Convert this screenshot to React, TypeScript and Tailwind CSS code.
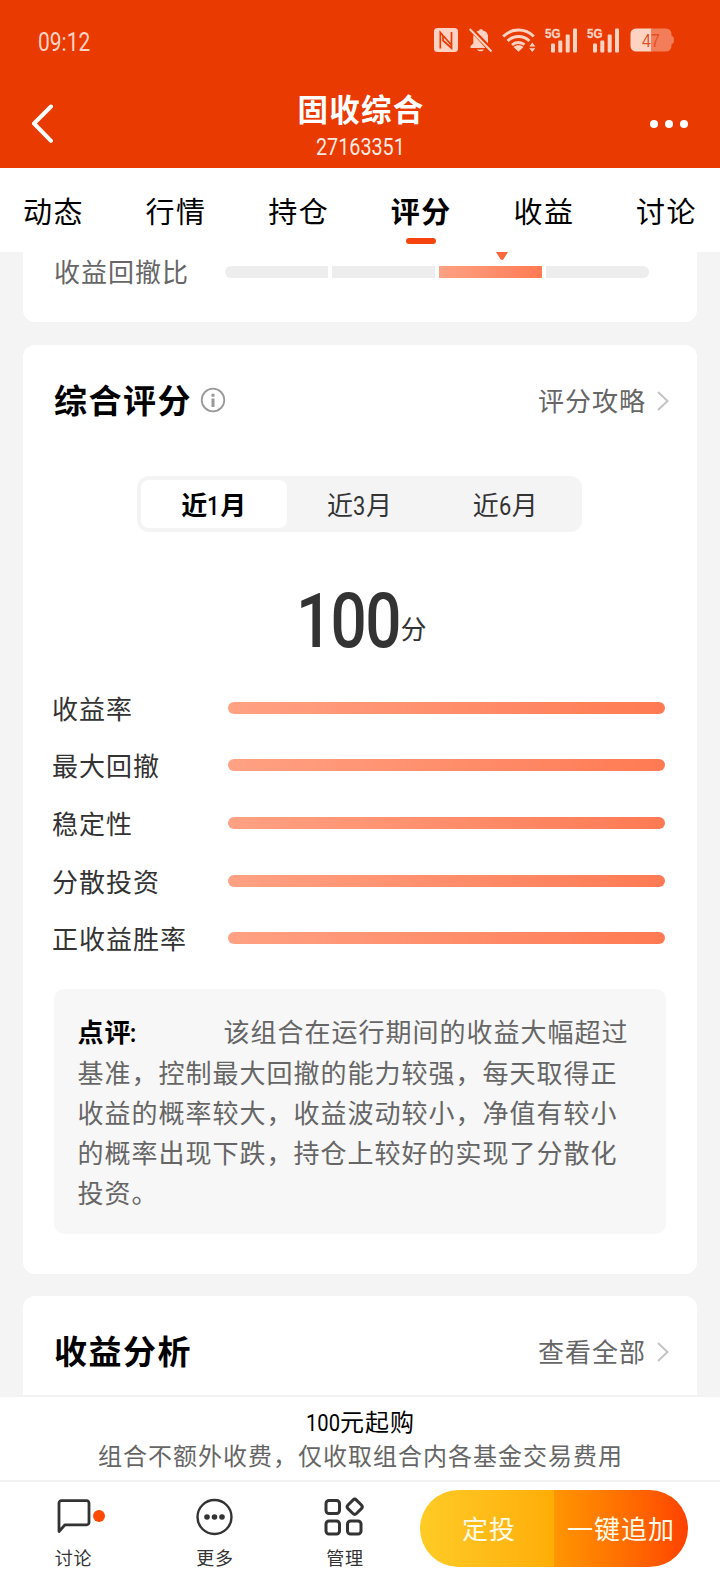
import clsx from 'clsx'
import type { ReactNode } from 'react'

const tabs = ['动态', '行情', '持仓', '评分', '收益', '讨论']
const periods = ['1', '3', '6']

const scores = [
  { label: '收益率', value: 100 },
  { label: '最大回撤', value: 100 },
  { label: '稳定性', value: 100 },
  { label: '分散投资', value: 100 },
  { label: '正收益胜率', value: 100 },
]

// condensed digits, each caller sets the width the squeezed text takes up
function Num({ className, children }: { className?: string; children: ReactNode }) {
  return (
    <span className={clsx("inline-block whitespace-nowrap text-left font-['Roboto',sans-serif] tracking-normal", className)}>
      <span className="inline-block origin-left scale-x-[0.84]">{children}</span>
    </span>
  )
}

function Signal() {
  return (
    <svg width="33" height="26" viewBox="0 0 33 26" fill="currentColor" stroke="none">
      <text x="0" y="10.500" fontSize="13.500" fontWeight="700" stroke="currentColor" strokeWidth="0.300" textLength="15.500" lengthAdjust="spacingAndGlyphs">
        5G
      </text>
      <rect x="6" y="16.500" width="4" height="9" rx="1" />
      <rect x="13.300" y="13.500" width="4" height="12" rx="1" />
      <rect x="20.700" y="7.500" width="4" height="18" rx="1" />
      <rect x="28" y="1.500" width="4" height="24" rx="1" />
    </svg>
  )
}

function StatusBar() {
  return (
    <div className="flex h-[80px] items-center justify-between pl-[38px] pr-[45px] text-[#ffd3c4]">
      <span className="pt-[4px] text-[25px] leading-none">
        <Num className="w-[53px] font-normal">09:12</Num>
      </span>
      <div className="flex items-center">
        <svg width="24" height="24" viewBox="0 0 24 24" className="mr-[11px]">
          <rect width="24" height="24" rx="3.500" fill="currentColor" />
          <path d="M6.300 20.500V4.500L17 16.500M17.500 4v16L9 12.500V8" fill="none" stroke="#e93a02" strokeWidth="1.700" />
        </svg>
        <svg width="24" height="24" viewBox="0 0 24 24" fill="currentColor" className="mr-[9px]">
          <path d="M7.500 3.500C9 2.700 10 2.300 10.600 2.200V1.300h2.800v.9c3.900.8 5.600 3.300 5.600 6.500v6.500zM4.600 7 16.500 20H1.500v-2l2.800-2.500V9.500c0-.7.100-1.600.3-2.500z" />
          <path d="M8 21.500h7c-.8 2.400-6.200 2.400-7 0z" />
          <path d="M.7 1 22.500 23.500" stroke="currentColor" strokeWidth="2" />
        </svg>
        <svg width="34" height="24" viewBox="0 0 34 24" fill="none" stroke="currentColor" className="mr-[9px]">
          <path d="M1.200 8.500a21.500 21.500 0 0 1 30.600 0" strokeWidth="3" />
          <path d="M5.600 13a15.500 15.500 0 0 1 21.800 0" strokeWidth="3" />
          <path d="M10 17a9.500 9.500 0 0 1 12.500-.3" strokeWidth="2.800" />
          <path d="M11.500 19c2.500-2.400 7.500-2.400 10 0l-5 4.700z" fill="currentColor" stroke="none" />
          <path d="M27.200 18.500h6.200L30.300 14.500zM27.200 20.300h6.200L30.300 24z" fill="currentColor" stroke="none" />
        </svg>
        <div className="mr-[9px]">
          <Signal />
        </div>
        <div className="mr-[10px]">
          <Signal />
        </div>
        <svg width="45" height="24" viewBox="0 0 45 24">
          <path d="M6 .5h15.500v23H6a5.500 5.500 0 0 1-5.500-5.500V6A5.500 5.500 0 0 1 6 .5z" fill="#ffd3c4" />
          <path d="M21.500.5H36A5.500 5.500 0 0 1 41.500 6v2q2.500 0 2.500 4t-2.500 4v2a5.500 5.500 0 0 1-5.500 5.500H21.500z" fill="#f27d58" />
          <text x="12" y="18.500" fontSize="18" textLength="18" lengthAdjust="spacingAndGlyphs" fill="#e4501f">
            47
          </text>
        </svg>
      </div>
    </div>
  )
}

function Header() {
  return (
    <header className="flex h-[88px] items-start justify-between px-[30px]">
      <svg width="60" height="40" viewBox="0 0 60 40" className="mt-[24px]" fill="none" stroke="#fff" strokeWidth="4" strokeLinecap="round" strokeLinejoin="round">
        <path d="M21 2.500 4 19.500 21 36.800" />
      </svg>
      <div className="flex flex-col items-center text-white">
        <h1 className="mt-[13px] h-[34px] pl-[2px] text-[30.500px] font-bold leading-[34px] tracking-[1.300px]">固收综合</h1>
        <span className="mt-[8px] text-[23.500px] leading-[24px] text-[#ffe9e1]">
          <Num className="w-[88px] font-normal">27163351</Num>
        </span>
      </div>
      <div className="mt-[40px] flex h-2 w-[60px] justify-end gap-[7px] pr-[1.500px]">
        <i className="size-2 rounded-full bg-white" />
        <i className="size-2 rounded-full bg-white" />
        <i className="size-2 rounded-full bg-white" />
      </div>
    </header>
  )
}

function Tabs() {
  return (
    <nav className="flex h-[84px] justify-between bg-white px-[23px] text-[29px] tracking-[1.500px] text-black">
      {tabs.map((tab) => (
        <div key={tab} className="flex flex-col items-center">
          <span className={clsx('mt-[24px] leading-[42px]', tab === '评分' && 'font-bold')}>{tab}</span>
          {tab === '评分' && <i className="mr-px mt-[4px] h-[6px] w-[30px] rounded-full bg-[#f5440f]" />}
        </div>
      ))}
    </nav>
  )
}

function CardHead({ title, link, info }: { title: string; link: string; info?: boolean }) {
  return (
    <div className="flex h-[50px] items-center pl-[31px] pr-[28px]">
      <h2 className="text-[33px] font-bold leading-[50px] tracking-[1.500px] text-black">{title}</h2>
      {info && (
        <svg width="26" height="26" viewBox="0 0 26 26" className="mb-[4px] ml-[8px]" fill="none" stroke="#999">
          <circle cx="13" cy="13" r="11.300" strokeWidth="1.800" />
          <path d="M13 11.500v8.500M13 6.700v3" strokeWidth="3" />
        </svg>
      )}
      <span className="ml-auto pt-px text-[26px] tracking-[1px] text-[#666]">{link}</span>
      <svg width="12" height="20" viewBox="0 0 12 20" className="mb-[3px] ml-[11px]" fill="none" stroke="#c4c4c4" strokeWidth="2">
        <path d="M1 1 10.500 10 1 19" />
      </svg>
    </div>
  )
}

function ScoreCard() {
  return (
    <section className="mt-[23px] h-[929px] rounded-xl bg-white pt-[32px]">
      <CardHead title="综合评分" link="评分攻略" info />
      <div className="ml-[114px] mt-[49px] flex h-[56px] w-[445px] rounded-xl bg-[#f4f4f4] p-1 text-[26px]">
        {periods.map((p) => (
          <div
            key={p}
            className={clsx(
              'flex-1 pt-[4px] text-center leading-[44px]',
              p === '1' ? 'rounded-lg bg-white font-bold text-black' : 'text-[#333]',
            )}
          >
            近
            <Num className={clsx('w-[13px]', p === '1' ? 'font-medium' : 'font-normal')}>{p}</Num>月
          </div>
        ))}
      </div>
      <div className="mt-[49px] flex h-[79px] justify-center pl-[3px] text-[#333]">
        <span className="text-[76px] leading-[80px]">
          <Num className="w-[104px] font-medium">
            <span className="tracking-[-2px]">100</span>
          </Num>
        </span>
        <span className="mt-[31px] text-[26px] leading-[36px]">分</span>
      </div>
      <ul className="mt-[19px] pl-[29px] pr-[32px]">
        {scores.map((s) => (
          <li key={s.label} className="flex h-[57.600px] items-center">
            <span className="w-[175.500px] pt-[5px] text-[26px] tracking-[1px] text-[#333]">{s.label}</span>
            <div className="flex-1">
              <div
                className="h-[12px] rounded-full bg-linear-to-r from-[#ffa183] to-[#ff7a53]"
                style={{ width: `${s.value}%` }}
              />
            </div>
          </li>
        ))}
      </ul>
      <div className="ml-[31px] mr-[31.500px] mt-[22px] h-[245px] rounded-[10px] bg-[#f7f7f7] pl-[23.500px] pt-[24.500px] text-[26px] leading-[40.100px] tracking-[1px] text-[#666]">
        <div className="flex">
          <b className="w-[146px] text-black">
            点评<Num className="-ml-[2px] w-[8px]">:</Num>
          </b>
          <span className="whitespace-nowrap">该组合在运行期间的收益大幅超过</span>
        </div>
        <p className="w-[545px]">
          基准，控制最大回撤的能力较强，每天取得正收益的概率较大，收益波动较小，净值有较小的概率出现下跌，持仓上较好的实现了分散化投资。
        </p>
      </div>
    </section>
  )
}

function Toolbar() {
  return (
    <footer className="flex h-[104px] border-t-2 border-[#f3f3f3] bg-white text-[18px] tracking-[0.700px] text-[#333]">
      <div className="relative ml-[54.500px] flex w-[38px] flex-col items-center">
        <svg width="38" height="38" viewBox="0 0 38 38" className="mt-[15px]" fill="none" stroke="#333" strokeWidth="2.800" strokeLinejoin="round">
          <path d="M4 34.500V6a2.300 2.300 0 0 1 2.300-2.300h25.400A2.300 2.300 0 0 1 34 6v19.500a2.300 2.300 0 0 1-2.300 2.300H10z" />
        </svg>
        <i className="absolute left-[38.500px] top-[28px] size-3 rounded-full bg-[#ff4a05]" />
        <span className="mt-[11px] leading-[26px]">讨论</span>
      </div>
      <div className="ml-[103.500px] flex w-[38px] flex-col items-center">
        <svg width="38" height="38" viewBox="0 0 38 38" className="mt-[16px]" fill="none" stroke="#333" strokeWidth="2.400">
          <circle cx="18.500" cy="19" r="17" />
          <g fill="#333" stroke="none">
            <circle cx="11" cy="19" r="2.800" />
            <circle cx="18.500" cy="19" r="2.800" />
            <circle cx="26" cy="19" r="2.800" />
          </g>
        </svg>
        <span className="mt-[10px] leading-[26px]">更多</span>
      </div>
      <div className="ml-[90px] flex w-[42px] flex-col items-center">
        <svg width="42" height="40" viewBox="0 0 42 40" className="mt-[14px]" fill="none" stroke="#333" strokeWidth="3">
          <rect x="2" y="4.500" width="13.500" height="13" rx="3" />
          <rect x="2" y="25" width="13.500" height="13" rx="3" />
          <rect x="23.500" y="25" width="13.500" height="13" rx="3" />
          <rect x="24.700" y="4.800" width="12" height="12" rx="2.500" transform="rotate(45 30.700 10.800)" />
        </svg>
        <span className="mt-[10px] leading-[26px]">管理</span>
      </div>
      <div className="ml-auto mr-8 mt-2 flex h-[77px] w-[268px] overflow-hidden rounded-full text-[26px] leading-[74px] tracking-[1px] text-[#fffbe8]">
        <button className="w-[134px] bg-linear-to-r from-[#ffcb25] to-[#ffad05] pl-[4px] pt-[3px]">定投</button>
        <button className="flex-1 bg-linear-to-r from-[#ff9502] to-[#ff4000] pt-[3px]">一键追加</button>
      </div>
    </footer>
  )
}

export default function App() {
  return (
    <div className="flex h-[1584px] w-[720px] flex-col overflow-hidden bg-[#f4f4f4] font-['Liberation_Sans','Noto_Sans_CJK_SC',sans-serif]">
      <div className="shrink-0 bg-[#e93a02]">
        <StatusBar />
        <Header />
      </div>
      <div className="shrink-0">
        <Tabs />
      </div>
      <main className="min-h-0 flex-1 overflow-hidden px-[23px]">
        <section className="flex h-[70px] rounded-b-xl bg-white pl-[31px]">
          <span className="w-[171px] text-[26px] leading-[42px] tracking-[1px] text-[#666]">收益回撤比</span>
          <div className="relative mt-[14px] grid h-[12px] w-[424px] grid-cols-4 gap-1">
            <i className="rounded-l-full bg-[#ededed]" />
            <i className="bg-[#ededed]" />
            <i className="bg-linear-to-r from-[#ffa183] to-[#ff7a53]" />
            <i className="rounded-r-full bg-[#ededed]" />
            <svg width="12" height="8" viewBox="0 0 12 8" className="absolute -top-[14px] left-[271px]">
              <path d="M0 0h12L7.500 7.200q-1.500 1.400-3 0z" fill="#f9683c" />
            </svg>
          </div>
        </section>
        <ScoreCard />
        <section className="mt-[22px] h-[110px] rounded-t-xl bg-white pt-[32px]">
          <CardHead title="收益分析" link="查看全部" />
        </section>
      </main>
      <div className="flex h-[85px] shrink-0 flex-col items-center border-t-2 border-[#f3f3f3] bg-white pt-[9px] text-[24px] leading-[34px]">
        <p className="pl-px tracking-[1px] text-black">
          <Num className="w-[34px] font-normal">100</Num>元起购
        </p>
        <p className="pl-px tracking-[1px] text-[#666]">组合不额外收费，仅收取组合内各基金交易费用</p>
      </div>
      <div className="shrink-0">
        <Toolbar />
      </div>
    </div>
  )
}
